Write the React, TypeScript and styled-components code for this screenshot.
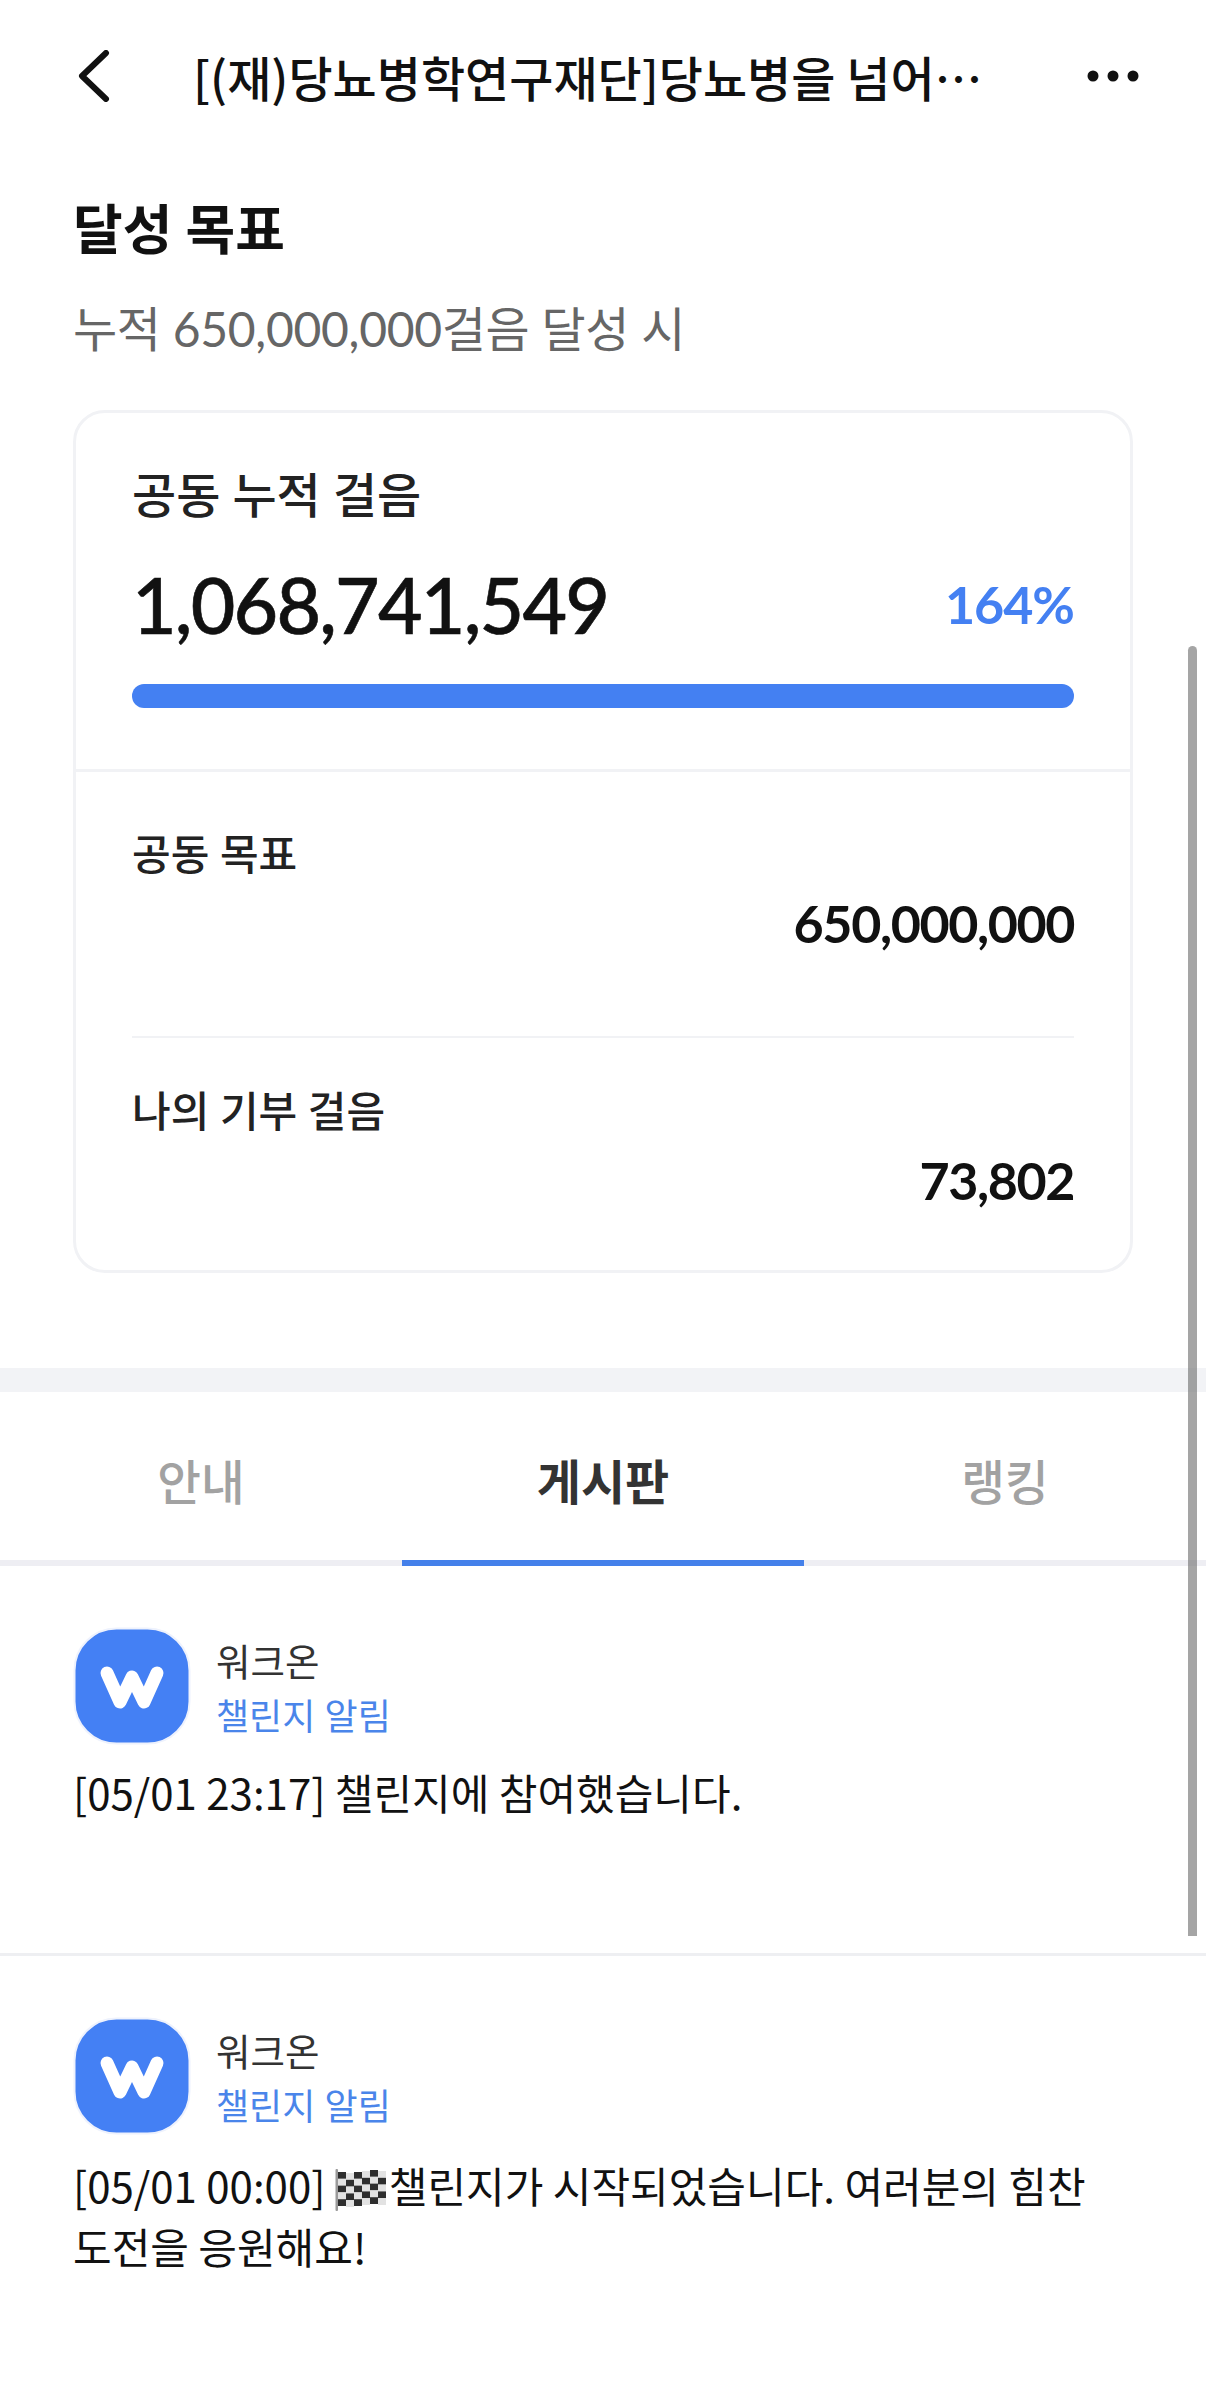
import React from "react";
import styled, { createGlobalStyle } from "styled-components";

const Global = createGlobalStyle`
  html, body { margin: 0; padding: 0; background: #fff; }
  body { font-family: Lato, "Noto Sans CJK KR", sans-serif; }
  * { box-sizing: border-box; }
`;
const Page = styled.div`
  position: relative;
  width: 1206px;
  height: 2403px;
  overflow: hidden;
  background: #fff;
`;
const Header = styled.header`
  height: 152px;
  display: flex;
  align-items: center;
  padding: 0 66px 0 76px;
`;
const BackIcon = styled.svg`
  width: 36px;
  height: 52px;
  flex: none;
`;
const Title = styled.h1`
  flex: 1;
  margin: 0 0 0 81px;
  min-width: 0;
  font-family: "Noto Sans CJK JP", sans-serif;
  font-size: 48px;
  line-height: 64px;
  font-weight: 500;
  color: #111;
  white-space: nowrap;
  overflow: hidden;
  text-overflow: ellipsis;
`;
const MoreIcon = styled.svg`
  width: 54px;
  height: 14px;
  flex: none;
  margin-left: 86px;
`;
const Goal = styled.section`
  padding: 43px 73px 95px;
`;
const GoalTitle = styled.h2`
  margin: 0;
  font-size: 54px;
  line-height: 70px;
  font-weight: 700;
  color: #111;
`;
const GoalSub = styled.p`
  margin: 34px 0 0;
  font-size: 48px;
  line-height: 60px;
  letter-spacing: -0.3px;
  font-weight: 400;
  color: #666;
`;
const Card = styled.div`
  margin-top: 51px;
  height: 863px;
  border: 3px solid #f1f2f5;
  border-radius: 32px;
  display: flex;
  flex-direction: column;
`;
const CardTop = styled.div`
  height: 359px;
  flex: none;
  padding: 52px 56px 0;
  border-bottom: 3px solid #f1f2f5;
`;
const CardLabel = styled.div`
  font-size: 48px;
  line-height: 60px;
  font-weight: 500;
  color: #222;
`;
const TotalRow = styled.div`
  display: flex;
  align-items: center;
  justify-content: space-between;
  margin-top: 34px;
  height: 90px;
`;
const TotalNumber = styled.span`
  font-size: 77px;
  letter-spacing: -1.8px;
  font-weight: 500;
  color: #111;
  -webkit-text-stroke: 0.6px #111;
`;
const Percent = styled.span`
  font-size: 52px;
  letter-spacing: -1px;
  font-weight: 700;
  color: #4480f2;
`;
const Bar = styled.div`
  margin-top: 35px;
  height: 24px;
  border-radius: 12px;
  background: #4480f2;
`;
const Stat = styled.div`
  margin: 0 56px;
  flex: none;
  height: 266px;
  padding-top: 54px;
  border-bottom: 2px solid #f1f2f5;
`;
const LastStat = styled.div`
  margin: 0 56px;
  padding-top: 45px;
`;
const StatLabel = styled.div`
  font-size: 42px;
  line-height: 56px;
  font-weight: 500;
  color: #222;
`;
const StatValue = styled.div`
  margin-top: 6px;
  text-align: right;
  font-size: 52px;
  letter-spacing: -1.4px;
  line-height: 70px;
  font-weight: 700;
  color: #111;
`;
const Band = styled.div`
  height: 24px;
  background: #f2f3f6;
`;
const Tabs = styled.nav`
  height: 174px;
  display: grid;
  grid-template-columns: repeat(3, 1fr);
  border-bottom: 6px solid #eeeef3;
`;
const Tab = styled.div<{ $active?: boolean }>`
  display: flex;
  align-items: center;
  justify-content: center;
  height: 174px;
  padding-top: 6px;
  font-size: ${(p) => (p.$active ? "48px" : "47.5px")};
  font-weight: ${(p) => (p.$active ? 700 : 500)};
  color: ${(p) => (p.$active ? "#333" : "#a2a2a2")};
  border-bottom: 6px solid ${(p) => (p.$active ? "#4480ea" : "transparent")};
`;
const Post = styled.article<{ $first?: boolean }>`
  height: ${(p) => (p.$first ? "390px" : "auto")};
  padding: 61px 73px 0;
  border-bottom: ${(p) => (p.$first ? "3px solid #eeeff2" : "none")};
`;
const PostHead = styled.div`
  display: flex;
  align-items: center;
  gap: 25px;
`;
const Avatar = styled.svg`
  width: 118px;
  height: 118px;
  flex: none;
`;
const Author = styled.div`
  display: flex;
  flex-direction: column;
  gap: 4px;
  padding-top: 6px;
`;
const AuthorName = styled.div`
  font-size: 37.5px;
  line-height: 50px;
  font-weight: 400;
  color: #333;
`;
const AuthorRole = styled.div`
  font-size: 36px;
  line-height: 50px;
  font-weight: 400;
  color: #4a85ea;
`;
const Body = styled.p<{ $gap: number }>`
  margin: ${(p) => p.$gap}px 0 0;
  font-size: 42px;
  line-height: 61px;
  font-weight: 400;
  color: #111;
  font-family: "Noto Sans CJK KR", sans-serif;
`;
const Flag = styled.svg`
  width: 52px;
  height: 44px;
  margin-right: 2px;
  vertical-align: -9px;
`;
const Scrollbar = styled.div`
  position: absolute;
  left: 1188px;
  top: 646px;
  width: 9px;
  height: 1290px;
  border-radius: 5px 5px 0 0;
  background: rgba(110, 110, 110, 0.62);
`;

function PostAvatar() {
  return (
    <Avatar viewBox="0 0 118 118">
      <rect x="1.500" y="1.500" width="115" height="115" rx="42" fill="#4480f4" stroke="#eef2fd" strokeWidth="2" />
      <path d="M34 46 L47 75 L59 50 L71 75 L84 46" fill="none" stroke="#fff" strokeWidth="13" strokeLinecap="round" strokeLinejoin="round" />
    </Avatar>
  );
}

const waveOffsets = [4, 5, 4, 3, 2, 3];

function FlagIcon() {
  const cells = [];
  for (let r = 0; r < 5; r++) {
    for (let c = 0; c < 6; c++) {
      const dark = (r + c) % 2 === 0;
      cells.push(
        <rect
          key={`${r}-${c}`}
          x={3 + c * 8}
          y={waveOffsets[c] + r * 6.8}
          width="8"
          height="6.800"
          fill={dark ? "#2e2e2e" : "#e2e2e2"}
        />
      );
    }
  }
  return (
    <Flag viewBox="0 0 52 44">
      <rect x="0.500" y="1" width="2.500" height="42" rx="1" fill="#9a9a9a" />
      {cells}
    </Flag>
  );
}

export default function App() {
  return (
    <Page>
      <Global />
      <Header>
        <BackIcon viewBox="0 0 36 52">
          <path d="M30 3 L6 26 L30 49" fill="none" stroke="#111" strokeWidth="6" strokeLinecap="round" strokeLinejoin="round" />
        </BackIcon>
        <Title>[(재)당뇨병학연구재단]당뇨병을 넘어서는 걸음</Title>
        <MoreIcon viewBox="0 0 54 14">
          <circle cx="7" cy="7" r="5.500" fill="#111" />
          <circle cx="27" cy="7" r="5.500" fill="#111" />
          <circle cx="47" cy="7" r="5.500" fill="#111" />
        </MoreIcon>
      </Header>
      <Goal>
        <GoalTitle>달성 목표</GoalTitle>
        <GoalSub>누적 650,000,000걸음 달성 시</GoalSub>
        <Card>
          <CardTop>
            <CardLabel>공동 누적 걸음</CardLabel>
            <TotalRow>
              <TotalNumber>1,068,741,549</TotalNumber>
              <Percent>164%</Percent>
            </TotalRow>
            <Bar />
          </CardTop>
          <Stat>
            <StatLabel>공동 목표</StatLabel>
            <StatValue>650,000,000</StatValue>
          </Stat>
          <LastStat>
            <StatLabel>나의 기부 걸음</StatLabel>
            <StatValue>73,802</StatValue>
          </LastStat>
        </Card>
      </Goal>
      <Band />
      <Tabs>
        <Tab>안내</Tab>
        <Tab $active>게시판</Tab>
        <Tab>랭킹</Tab>
      </Tabs>
      <Post $first>
        <PostHead>
          <PostAvatar />
          <Author>
            <AuthorName>워크온</AuthorName>
            <AuthorRole>챌린지 알림</AuthorRole>
          </Author>
        </PostHead>
        <Body $gap={16}>[05/01 23:17] 챌린지에 참여했습니다.</Body>
      </Post>
      <Post>
        <PostHead>
          <PostAvatar />
          <Author>
            <AuthorName>워크온</AuthorName>
            <AuthorRole>챌린지 알림</AuthorRole>
          </Author>
        </PostHead>
        <Body $gap={19}>
          [05/01 00:00] <FlagIcon />챌린지가 시작되었습니다. 여러분의 힘찬 도전을 응원해요!
        </Body>
      </Post>
      <Scrollbar />
    </Page>
  );
}
